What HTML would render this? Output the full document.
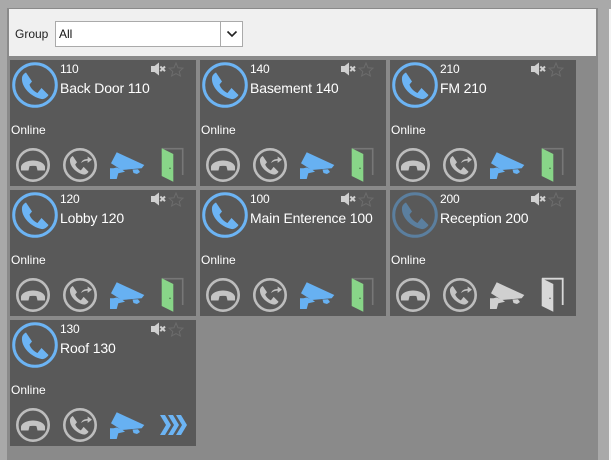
<!DOCTYPE html>
<html>
<head>
<meta charset="utf-8">
<style>
html,body{margin:0;padding:0}
body{width:611px;height:460px;overflow:hidden;position:relative;background:#a9a9a9;font-family:"Liberation Sans",sans-serif}
#main{position:absolute;left:7px;top:8px;width:591px;height:452px;background:#8a8a8a}
#panel{position:absolute;left:9px;top:9px;width:587px;height:47px;background:#f0f0f0}
#edge{position:absolute;left:609px;top:9px;width:2px;height:451px;background:#f4f4f4}
#lbl{position:absolute;left:15px;top:27px;font-size:12px;line-height:14px;color:#222}
#sel{position:absolute;left:55px;top:21px;width:186px;height:24px;border:1px solid #aaa;background:#fff}
#sel span{position:absolute;left:3px;top:5px;font-size:12px;line-height:14px;color:#111}
#sel i{position:absolute;left:164px;top:0;width:1px;height:24px;background:#aaa}
#sel svg{position:absolute;left:170px;top:8px}
.c{position:absolute;width:186px;height:126px;background:#595959;color:#fff}
.c svg{position:absolute;left:0;top:0}
.n{position:absolute;left:50px;top:2px;font-size:12px;line-height:14px;letter-spacing:-.2px}
.t{position:absolute;left:50px;top:20px;font-size:14px;line-height:16px;letter-spacing:-.15px;white-space:nowrap}
.o{position:absolute;left:1px;top:63px;font-size:12px;line-height:14px}
</style>
</head>
<body>
<div id="main"></div>
<div id="panel"></div>
<div id="edge"></div>
<div id="lbl">Group</div>
<div id="sel"><span>All</span><i></i>
<svg width="12" height="8" viewBox="0 0 12 8"><path d="M1.5 1.5 L6 6 L10.5 1.5" fill="none" stroke="#222" stroke-width="1.6"/></svg></div>

<svg width="0" height="0" style="position:absolute">
<defs>
<path id="ph" d="M12 17.5C12.5 15 14 13.5 16 12.5L22 21.5L19.5 24.5C20 27.5 24 31.5 27.5 33L31.5 28L38.5 35C37 37.5 34 39.5 31.5 39C21 37 11 27 12 17.5Z"/>
<g id="base">
<path d="M141 6H144.5L149 2.5V15.5L144.5 12H141Z" fill="#d0d0d0"/>
<path d="M150.3 6.5L155 11.2M155 6.5L150.3 11.2" stroke="#d0d0d0" stroke-width="2" fill="none"/>
<path d="M166 3L168 7.8L173 8.2L169.2 11.5L170.4 16L166 13.6L161.6 16L162.8 11.5L159 8.2L164 7.8Z" fill="none" stroke="#6c6c6c" stroke-width="1"/>
<circle cx="23" cy="105" r="15.7" fill="none" stroke="#bdbdbd" stroke-width="2.6"/>
<path transform="translate(23 105)" d="M-12 5.5V1.5C-11-2.5-5-4.5 0-4.5S11-2.5 12 1.5V5.5H4.5L3.5 1.2C2 .8-2 .8-3.5 1.2L-4.5 5.5Z" fill="#c4c4c4"/>
<circle cx="70" cy="105" r="15.7" fill="none" stroke="#bdbdbd" stroke-width="2.6"/>
<use href="#ph" transform="translate(51.6 87.25) scale(.7)" fill="#c4c4c4"/>
<path d="M70.5 104C71 100.5 73 98.8 77.3 98.6V95.8L82.5 99.6L77.3 103.6V101C74.5 101 72.5 102.2 70.5 104Z" fill="#c4c4c4" stroke="#595959" stroke-width=".7"/>
</g>
<g id="cam">
<path d="M106.7 92.3L134.3 105L131.7 108.3L111.7 110L101 103.3Z"/>
<path d="M100 108.3H103.5L106.5 107.5L112 109.5L115 111.7L108.3 113.3L106.7 119H100Z"/>
<path d="M122.5 109.5L128 109.3L130 112L127 114L123.5 113Z"/>
</g>
<path id="chev" d="M150 95H155L161 105L155 115H150L156 105Z"/>
</defs>
</svg>

<div class="c" style="left:10px;top:60px">
<svg width="186" height="126"><circle cx="25" cy="25" r="21.3" fill="none" stroke="#6cb4f4" stroke-width="3"/><use href="#ph" fill="#6cb4f4"/><use href="#base"/><use href="#cam" fill="#67b1f2"/><path d="M152 88.7H172.7V115" fill="none" stroke="#777" stroke-width="1.6"/><path d="M151.7 88.3L163.3 94V121.7L151.7 116Z" fill="#88d688"/><circle cx="160" cy="108.3" r=".8" fill="#4a7a4a"/></svg>
<div class="n">110</div><div class="t">Back Door 110</div><div class="o">Online</div></div>

<div class="c" style="left:200px;top:60px">
<svg width="186" height="126"><circle cx="25" cy="25" r="21.3" fill="none" stroke="#6cb4f4" stroke-width="3"/><use href="#ph" fill="#6cb4f4"/><use href="#base"/><use href="#cam" fill="#67b1f2"/><path d="M152 88.7H172.7V115" fill="none" stroke="#777" stroke-width="1.6"/><path d="M151.7 88.3L163.3 94V121.7L151.7 116Z" fill="#88d688"/><circle cx="160" cy="108.3" r=".8" fill="#4a7a4a"/></svg>
<div class="n">140</div><div class="t">Basement 140</div><div class="o">Online</div></div>

<div class="c" style="left:390px;top:60px">
<svg width="186" height="126"><circle cx="25" cy="25" r="21.3" fill="none" stroke="#6cb4f4" stroke-width="3"/><use href="#ph" fill="#6cb4f4"/><use href="#base"/><use href="#cam" fill="#67b1f2"/><path d="M152 88.7H172.7V115" fill="none" stroke="#777" stroke-width="1.6"/><path d="M151.7 88.3L163.3 94V121.7L151.7 116Z" fill="#88d688"/><circle cx="160" cy="108.3" r=".8" fill="#4a7a4a"/></svg>
<div class="n">210</div><div class="t">FM 210</div><div class="o">Online</div></div>

<div class="c" style="left:10px;top:190px">
<svg width="186" height="126"><circle cx="25" cy="25" r="21.3" fill="none" stroke="#6cb4f4" stroke-width="3"/><use href="#ph" fill="#6cb4f4"/><use href="#base"/><use href="#cam" fill="#67b1f2"/><path d="M152 88.7H172.7V115" fill="none" stroke="#777" stroke-width="1.6"/><path d="M151.7 88.3L163.3 94V121.7L151.7 116Z" fill="#88d688"/><circle cx="160" cy="108.3" r=".8" fill="#4a7a4a"/></svg>
<div class="n">120</div><div class="t">Lobby 120</div><div class="o">Online</div></div>

<div class="c" style="left:200px;top:190px">
<svg width="186" height="126"><circle cx="25" cy="25" r="21.3" fill="none" stroke="#6cb4f4" stroke-width="3"/><use href="#ph" fill="#6cb4f4"/><use href="#base"/><use href="#cam" fill="#67b1f2"/><path d="M152 88.7H172.7V115" fill="none" stroke="#777" stroke-width="1.6"/><path d="M151.7 88.3L163.3 94V121.7L151.7 116Z" fill="#88d688"/><circle cx="160" cy="108.3" r=".8" fill="#4a7a4a"/></svg>
<div class="n">100</div><div class="t">Main Enterence 100</div><div class="o">Online</div></div>

<div class="c" style="left:390px;top:190px">
<svg width="186" height="126"><circle cx="25" cy="25" r="21.3" fill="none" stroke="#5b7f9f" stroke-width="3"/><use href="#ph" fill="#5b7f9f"/><use href="#base"/><use href="#cam" fill="#d0d0d0"/><path d="M152 88.7H172.7V115" fill="none" stroke="#d8d8d8" stroke-width="1.8"/><path d="M151.7 88.3L163.3 94V121.7L151.7 116Z" fill="#d8d8d8"/><circle cx="160" cy="108.3" r=".8" fill="#666"/></svg>
<div class="n">200</div><div class="t">Reception 200</div><div class="o">Online</div></div>

<div class="c" style="left:10px;top:320px">
<svg width="186" height="126"><circle cx="25" cy="25" r="21.3" fill="none" stroke="#6cb4f4" stroke-width="3"/><use href="#ph" fill="#6cb4f4"/><use href="#base"/><use href="#cam" fill="#67b1f2"/><use href="#chev" fill="#6cb4f4"/><use href="#chev" x="8" fill="#6cb4f4"/><use href="#chev" x="16" fill="#6cb4f4"/></svg>
<div class="n">130</div><div class="t">Roof 130</div><div class="o">Online</div></div>
</body>
</html>
